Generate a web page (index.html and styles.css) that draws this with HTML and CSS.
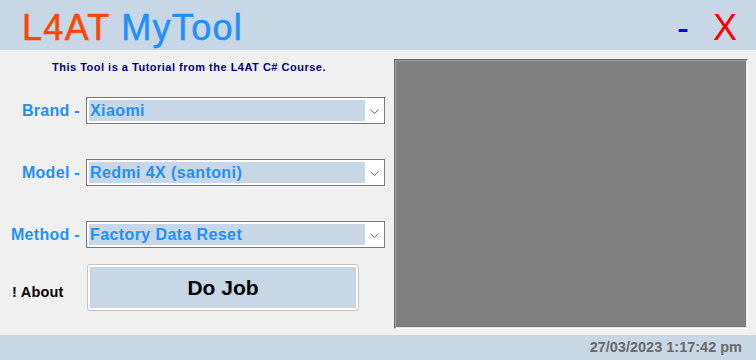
FILE: index.html
```html
<!DOCTYPE html>
<html>
<head>
<meta charset="utf-8">
<link rel="stylesheet" href="styles.css">
</head>
<body>
<header class="titlebar">
  <div class="title"><span class="brand-l4at">L4AT</span> <span class="brand-tool">MyTool</span></div>
  <div class="controls"><span class="min">-</span><span class="close">X</span></div>
</header>
<main class="content">
  <section class="form">
    <p class="subtitle">This Tool is a Tutorial from the L4AT C# Course.</p>
    <div class="fields">
      <label class="field-label">Brand -</label>
      <div class="combo"><span class="combo-value">Xiaomi</span><svg class="chev" width="9" height="6" viewBox="0 0 9 6"><polyline points="0.5,0.8 4.5,4.6 8.5,0.8" fill="none" stroke="#606060" stroke-width="1"/></svg></div>
      <label class="field-label">Model -</label>
      <div class="combo"><span class="combo-value">Redmi 4X (santoni)</span><svg class="chev" width="9" height="6" viewBox="0 0 9 6"><polyline points="0.5,0.8 4.5,4.6 8.5,0.8" fill="none" stroke="#606060" stroke-width="1"/></svg></div>
      <label class="field-label">Method -</label>
      <div class="combo"><span class="combo-value">Factory Data Reset</span><svg class="chev" width="9" height="6" viewBox="0 0 9 6"><polyline points="0.5,0.8 4.5,4.6 8.5,0.8" fill="none" stroke="#606060" stroke-width="1"/></svg></div>
    </div>
    <div class="actions">
      <span class="about">! About</span>
      <button class="do-job">Do Job</button>
    </div>
  </section>
  <div class="screen"></div>
</main>
<footer class="statusbar">27/03/2023 1:17:42 pm</footer>
</body>
</html>
```
FILE: styles.css
```css
* { box-sizing: border-box; }
html, body { margin: 0; padding: 0; }
body {
  width: 756px;
  height: 360px;
  background: #f0f0f0;
  font-family: "Liberation Sans", Arial, sans-serif;
  display: flex;
  flex-direction: column;
  overflow: hidden;
}
.titlebar {
  height: 50px;
  flex: none;
  background: #c8d7e5;
  display: flex;
  justify-content: space-between;
  align-items: flex-start;
  padding: 5px 19px 0 22px;
  font-size: 36px;
  line-height: 45px;
}
.title {
  letter-spacing: 1.3px;
  -webkit-text-stroke: 0.5px currentColor;
}
.brand-l4at { color: #ff4500; -webkit-text-stroke: 0.5px #ff4500; }
.brand-tool { color: #1e90ff; -webkit-text-stroke: 0.5px #1e90ff; }
.controls { display: flex; gap: 24px; }
.min { color: #0000ff; }
.close { color: #ff0000; }

.content {
  flex: 1;
  display: grid;
  grid-template-columns: 394px 1fr;
}
.form { padding-top: 11px; }
.subtitle {
  margin: 0 0 0 52px;
  font-size: 11px;
  line-height: 13px;
  letter-spacing: 0.5px;
  font-weight: bold;
  color: #000080;
  white-space: nowrap;
}
.fields {
  margin-top: 23px;
  display: grid;
  grid-template-columns: 80px 299px;
  grid-auto-rows: 27px;
  column-gap: 6px;
  row-gap: 35px;
}
.field-label {
  text-align: right;
  white-space: nowrap;
  font-size: 16px;
  font-weight: bold;
  letter-spacing: 0.3px;
  line-height: 27px;
  color: #1e90ff;
}
.combo {
  position: relative;
  background: #fff;
  border: 1px solid #7a7a7a;
  padding: 2px 19px 2px 2px;
  display: flex;
}
.combo-value {
  flex: 1;
  background: #c8d7e5;
  color: #1e90ff;
  font-size: 16px;
  font-weight: bold;
  letter-spacing: 0.4px;
  line-height: 21px;
  padding-left: 1px;
  white-space: nowrap;
}
.chev {
  position: absolute;
  right: 5px;
  top: 11px;
}
.actions {
  margin-top: 16px;
  display: grid;
  grid-template-columns: 75px 272px;
  padding-left: 12px;
}
.about {
  font-size: 14.5px;
  font-weight: bold;
  letter-spacing: 0.2px;
  color: #000;
  padding-top: 20px;
}
.do-job {
  height: 47px;
  margin: 0;
  border: 1px solid #c4c4c4;
  border-radius: 3px;
  box-shadow: inset 0 0 0 2px #fff;
  background: #c8d7e5;
  font-family: "Liberation Sans", Arial, sans-serif;
  font-size: 21px;
  font-weight: bold;
  color: #000;
  padding: 0;
}
.screen {
  margin: 9px 8px 0 0;
  height: 270px;
  background: #808080;
  border-top: 1px solid #696969;
  border-left: 1px solid #696969;
  border-right: 1px solid #fff;
  border-bottom: 1px solid #fff;
  box-shadow: inset 1px 1px 0 #a0a0a0, inset -1px -1px 0 #e3e3e3;
}
.statusbar {
  height: 25px;
  flex: none;
  background: #c8d7e5;
  text-align: right;
  padding-right: 14px;
  font-size: 14.5px;
  line-height: 25px;
  font-weight: bold;
  color: #696969;
}
```
